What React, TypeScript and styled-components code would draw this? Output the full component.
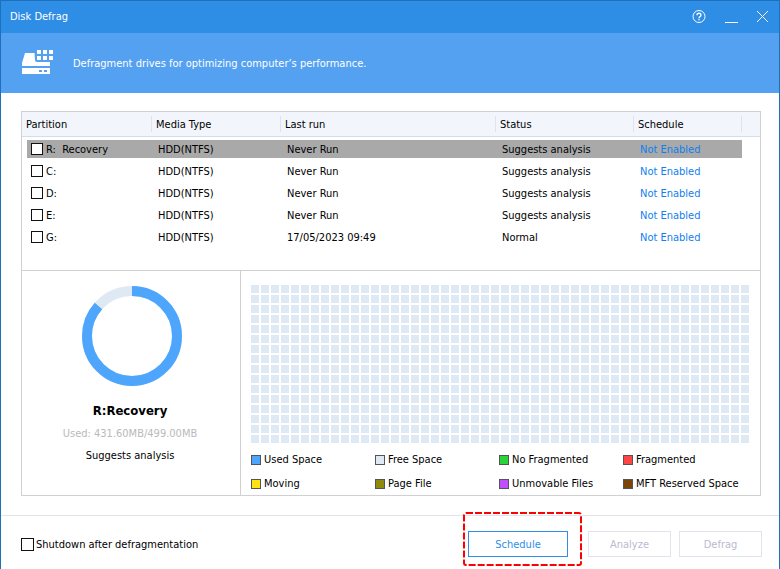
import React from 'react';
import styled, { createGlobalStyle } from 'styled-components';

const GlobalStyle = createGlobalStyle`
  * { box-sizing: border-box; }
  body { margin: 0; background: #fff; }
  body, button, input, table { font-family: 'DejaVu Sans Condensed', Tahoma, sans-serif; font-size: 11px; line-height: 18px; color: #000; }
  button { margin: 0; padding: 0; border: 0; background: none; cursor: pointer; }
`;

const Window = styled.div`
  display: flex;
  flex-direction: column;
  min-height: 100vh;
  border: 1px solid #1f70ba;
  border-bottom: 0;
`;

const TitleBar = styled.header`
  display: flex;
  align-items: center;
  height: 32px;
  padding: 0 8px 0 9px;
  background: #2e8de5;
  color: #fff;
`;

const Title = styled.h1`
  flex: 1;
  margin: 0;
  font-size: 11px;
  font-weight: 400;
`;

const WindowButtons = styled.div`
  display: flex;
  gap: 16px;
`;

const WindowButton = styled.button`
  display: flex;
  width: 16px;
  height: 16px;
`;

const Banner = styled.div`
  display: flex;
  align-items: center;
  gap: 20px;
  height: 60px;
  padding: 0 20px;
  background: #55a1f1;
  color: #fff;
`;

const Text = styled.span`
  padding-top: 2px;
`;

const Panel = styled.main`
  margin: 18px 18px 19px 20px;
  border: 1px solid #d0d1d2;
`;

const TableArea = styled.section`
  min-height: 159px;
  border-bottom: 1px solid #d0d0d0;
`;

const Table = styled.table`
  width: 100%;
  table-layout: fixed;
  border-collapse: separate;
  border-spacing: 0;
  tbody::before { content: ''; display: block; height: 1px; }
`;

const Col = styled.col<{ $w?: number }>`
  width: ${p => (p.$w ? `${p.$w}px` : 'auto')};
`;

const Th = styled.th`
  padding: 4px 0;
  background: #f2f6fc;
  border-bottom: 1px solid #d3deec;
  font-weight: 400;
  text-align: left;
`;

const HeadLabel = styled.div<{ $divider: boolean }>`
  height: 16px;
  padding-left: 4px;
  line-height: 18px;
  border-right: ${p => (p.$divider ? '1px solid #dfe4ea' : '0')};
`;

const Td = styled.td<{ $first?: boolean }>`
  height: 22px;
  padding: 2px 0 2px ${p => (p.$first ? 5 : 0)}px;
`;

const Cell = styled.div<{ $selected: boolean; $first?: boolean }>`
  display: flex;
  align-items: center;
  height: 18px;
  padding-left: ${p => (p.$first ? 4 : 6)}px;
  background: ${p => (p.$selected ? '#a9a9a9' : 'transparent')};
`;

const CheckLabel = styled.label`
  display: flex;
  align-items: center;
  gap: 3px;
  white-space: pre;
`;

const CheckBox = styled.input<{ $size: number }>`
  appearance: none;
  width: ${p => p.$size}px;
  height: ${p => p.$size}px;
  margin: 0;
  border: 1px solid #111;
  background: #fff;
  &:checked { background: #2e8de5; box-shadow: inset 0 0 0 2px #fff; }
`;

const LinkButton = styled.button`
  color: #0f80f0;
`;

const Details = styled.div`
  display: grid;
  grid-template-columns: 219px 1fr;
`;

const Summary = styled.section`
  display: flex;
  flex-direction: column;
  align-items: center;
  padding: 15px 2px 0 0;
  border-right: 1px solid #d0d0d0;
`;

const Donut = styled.svg`
  margin-left: 4px;
`;

const DriveName = styled.h2`
  margin: 15px 0 2px;
  font-size: 13px;
  line-height: 20px;
  font-weight: 700;
`;

const Line = styled.p<{ $muted?: boolean }>`
  margin: 0;
  line-height: 22px;
  color: ${p => (p.$muted ? '#b9b9bd' : '#000')};
`;

const MapArea = styled.section`
  padding: 14px 10px 6px;
`;

const Blocks = styled.div`
  display: grid;
  grid-template-columns: repeat(auto-fill, 8px);
  grid-auto-rows: 8px;
  gap: 2px;
`;

const Block = styled.span`
  background: #dee9f4;
`;

const Legend = styled.ul`
  display: grid;
  grid-template-columns: repeat(4, 124px);
  grid-auto-rows: 10px;
  row-gap: 14px;
  margin: 12px 0 0;
  padding: 0;
  list-style: none;
`;

const LegendItem = styled.li`
  display: flex;
  align-items: center;
  gap: 3px;
  white-space: nowrap;
`;

const Swatch = styled.span<{ $color: string }>`
  width: 10px;
  height: 10px;
  border: 1px solid #555;
  background: ${p => p.$color};
`;

const Footer = styled.footer`
  display: flex;
  flex: 1;
  align-items: flex-start;
  justify-content: space-between;
  padding: 15px 17px 12px 20px;
  border-top: 1px solid #e3e4ea;
`;

const FooterCheck = styled(CheckLabel)`
  height: 26px;
  gap: 2px;
`;

const Actions = styled.div`
  display: flex;
  gap: 8px;
`;

const ActionButton = styled.button<{ $primary?: boolean }>`
  width: ${p => (p.$primary ? 100 : 83)}px;
  height: 26px;
  padding-top: 2px;
  border: 1px solid ${p => (p.$primary ? '#2e8de5' : '#e2e3ec')};
  background: #fff;
  color: ${p => (p.$primary ? '#2e8de5' : '#bcb9d0')};
`;

const Highlighted = styled.div`
  position: relative;
  margin-right: 12px;
`;

const Highlight = styled.svg`
  position: absolute;
  left: -5px;
  top: -19px;
  pointer-events: none;
`;

const HEADERS = ['Partition', 'Media Type', 'Last run', 'Status', 'Schedule', ''];
const WIDTHS = [130, 129, 215, 138, 108, undefined];

const DRIVES = [
  { name: 'R:  Recovery', last: 'Never Run', status: 'Suggests analysis' },
  { name: 'C:', last: 'Never Run', status: 'Suggests analysis' },
  { name: 'D:', last: 'Never Run', status: 'Suggests analysis' },
  { name: 'E:', last: 'Never Run', status: 'Suggests analysis' },
  { name: 'G:', last: '17/05/2023 09:49', status: 'Normal' },
];

const LEGEND = [
  ['Used Space', '#4da6fb'],
  ['Free Space', '#dee9f4'],
  ['No Fragmented', '#28d63c'],
  ['Fragmented', '#ff4545'],
  ['Moving', '#ffe310'],
  ['Page File', '#8f8a0c'],
  ['Unmovable Files', '#c14fff'],
  ['MFT Reserved Space', '#7d4407'],
];

const BLOCK_COUNT = 800;
const RADIUS = 45;
const CIRCUMFERENCE = 2 * Math.PI * RADIUS;
const USED = 431.6 / 499;

function DriveIcon() {
  return (
    <svg width="32" height="26" viewBox="0 0 32 26" fill="#fff" aria-hidden="true">
      <path d="M4 3h9.500l.5 7q0 2 2 2h13v4H1v-3z" />
      <path fillRule="evenodd" d="M1 18h28v6H1zM18 20v2h3v-2zM23 20v2h3v-2z" />
      {[0, 6].map(y => [16, 22, 28].map(x => <rect key={`${x}-${y}`} x={x} y={y} width="4" height="4" />))}
    </svg>
  );
}

export default function App() {
  return (
    <>
      <GlobalStyle />
      <Window>
        <TitleBar>
          <Title>Disk Defrag</Title>
          <WindowButtons>
            <WindowButton aria-label="Help">
              <svg width="16" height="16" viewBox="0 0 16 16" fill="none" stroke="#fff">
                <circle cx="8" cy="7.500" r="6" />
                <path d="M6 6.200c0-2.600 4-2.600 4 0 0 1.500-2 1.300-2 3M8 10v1.300" strokeWidth="1.300" />
              </svg>
            </WindowButton>
            <WindowButton aria-label="Minimize">
              <svg width="16" height="16" viewBox="0 0 16 16" stroke="#fff"><path d="M2 13.500h13" /></svg>
            </WindowButton>
            <WindowButton aria-label="Close">
              <svg width="16" height="16" viewBox="0 0 16 16" stroke="#fff"><path d="M2 2l11 11M13 2L2 13" /></svg>
            </WindowButton>
          </WindowButtons>
        </TitleBar>
        <Banner>
          <DriveIcon />
          <Text>Defragment drives for optimizing computer’s performance.</Text>
        </Banner>
        <Panel>
          <TableArea>
            <Table>
              <colgroup>{WIDTHS.map((w, i) => <Col key={i} $w={w} />)}</colgroup>
              <thead>
                <tr>
                  {HEADERS.map((h, i) => (
                    <Th key={i} scope="col"><HeadLabel $divider={i < 5}>{h}</HeadLabel></Th>
                  ))}
                </tr>
              </thead>
              <tbody>
                {DRIVES.map((d, i) => (
                  <tr key={d.name}>
                    <Td $first>
                      <Cell $first $selected={i === 0}>
                        <CheckLabel><CheckBox type="checkbox" $size={12} /><Text>{d.name}</Text></CheckLabel>
                      </Cell>
                    </Td>
                    <Td><Cell $selected={i === 0}><Text>HDD(NTFS)</Text></Cell></Td>
                    <Td><Cell $selected={i === 0}><Text>{d.last}</Text></Cell></Td>
                    <Td><Cell $selected={i === 0}><Text>{d.status}</Text></Cell></Td>
                    <Td><Cell $selected={i === 0}><LinkButton><Text as="div">Not Enabled</Text></LinkButton></Cell></Td>
                    <Td />
                  </tr>
                ))}
              </tbody>
            </Table>
          </TableArea>
          <Details>
            <Summary>
              <Donut width="100" height="100" viewBox="0 0 100 100" fill="none" strokeWidth="10" role="img" aria-label="Used space">
                <circle cx="50" cy="50" r={RADIUS} stroke="#dfe9f4" />
                <circle cx="50" cy="50" r={RADIUS} stroke="#4da6fb" strokeDasharray={`${CIRCUMFERENCE * USED} ${CIRCUMFERENCE}`} transform="rotate(-90 50 50)" />
              </Donut>
              <DriveName>R:Recovery</DriveName>
              <Line $muted>Used: 431.60MB/499.00MB</Line>
              <Line>Suggests analysis</Line>
            </Summary>
            <MapArea>
              <Blocks>{Array.from({ length: BLOCK_COUNT }, (_, i) => <Block key={i} />)}</Blocks>
              <Legend>
                {LEGEND.map(([name, color]) => (
                  <LegendItem key={name}><Swatch $color={color} />{name}</LegendItem>
                ))}
              </Legend>
            </MapArea>
          </Details>
        </Panel>
        <Footer>
          <FooterCheck><CheckBox type="checkbox" $size={13} /><Text>Shutdown after defragmentation</Text></FooterCheck>
          <Actions>
            <Highlighted>
              <ActionButton $primary>Schedule</ActionButton>
              <Highlight width="119" height="54" viewBox="0 0 119 54" fill="none" stroke="#f00" strokeWidth="2">
                <rect x="1" y="1" width="117" height="52" rx="2" strokeDasharray="7 2" />
              </Highlight>
            </Highlighted>
            <ActionButton disabled>Analyze</ActionButton>
            <ActionButton disabled>Defrag</ActionButton>
          </Actions>
        </Footer>
      </Window>
    </>
  );
}
